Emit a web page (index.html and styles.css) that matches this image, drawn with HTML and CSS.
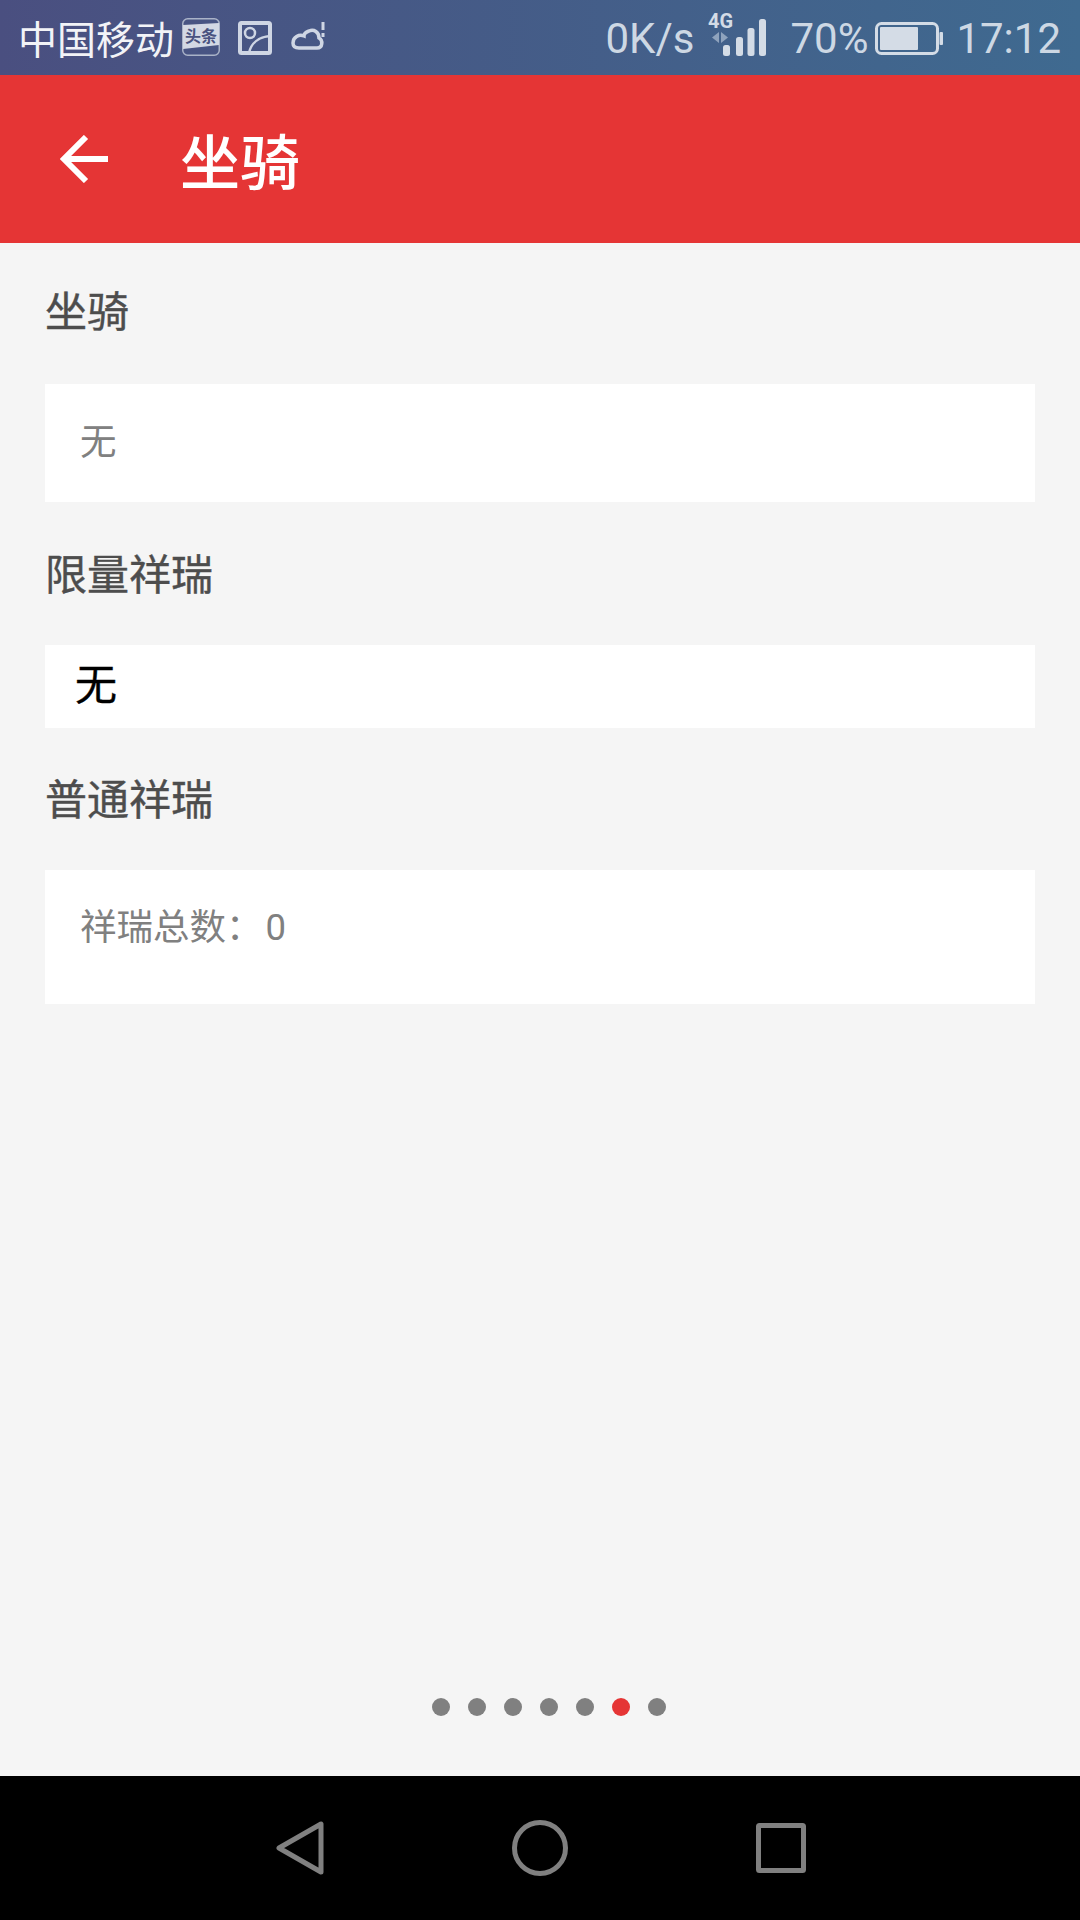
FILE: index.html
```html
<!DOCTYPE html>
<html lang="en">
<head>
    <meta charset="UTF-8">
    <meta name="viewport" content="width=device-width, initial-scale=1.0">
    <title>坐骑</title>
    <link rel="stylesheet" href="styles.css">
</head>
<body>
    <div class="status-bar">
        <div class="status-left">
            <span class="carrier">中国移动</span>
            <svg class="news-icon" width="38" height="38" viewBox="0 0 38 38">
                <rect x="0.75" y="0.75" width="36.5" height="36.5" rx="5" fill="none" stroke="#aab3c8" stroke-width="1.5"/>
                <path d="M1 7 L37 5 V27 L1 31 Z" fill="#d3d8e4"/>
                <text x="3" y="24" class="news-text">头条</text>
            </svg>
            <svg class="photo-icon" width="34" height="34" viewBox="0 0 34 34" fill="none" stroke="#cfd6e4">
                <rect x="2" y="2" width="30" height="30" rx="1.5" stroke-width="4"/>
                <circle cx="12" cy="12" r="5" stroke-width="2.5"/>
                <path d="M11 32 C13 22 21 16 32 15" stroke-width="2.5"/>
            </svg>
            <svg class="cloud-icon" width="36" height="32" viewBox="0 0 36 32" fill="none" stroke="#cfd6e4">
                <path d="M9 28 H27 C33 28 33 20 29 18 C29 12 24 9 19 11 C16 12 14 14 14 16 C9 14 3 17 3 23 C3 26 5 28 9 28 Z" stroke-width="3.5"/>
                <path d="M33 2 V10 M33 13 V17" stroke-width="3"/>
            </svg>
        </div>
        <div class="status-right">
            <span class="speed">0K/s</span>
            <svg class="signal-icon" width="58" height="48" viewBox="0 0 58 48">
                <text x="0" y="20" class="net-text">4G</text>
                <path d="M11 24 L4 29.5 L11 35 Z M13 24 L20 29.5 L13 35 Z" fill="#8fa3bd"/>
                <rect x="15" y="37" width="7" height="11" rx="2.5" fill="#d4dce6"/>
                <rect x="28" y="29" width="7" height="19" rx="2.5" fill="#d4dce6"/>
                <rect x="39.5" y="20" width="7" height="28" rx="2.5" fill="#d4dce6"/>
                <rect x="51" y="11" width="7" height="37" rx="2.5" fill="#d4dce6"/>
            </svg>
            <span class="percent">70%</span>
            <svg class="battery-icon" width="68" height="33" viewBox="0 0 68 33">
                <rect x="1.5" y="1.5" width="61" height="30" rx="5" fill="none" stroke="#d4dce6" stroke-width="3"/>
                <rect x="5" y="5" width="38" height="23" rx="1" fill="#d4dce6"/>
                <rect x="64.5" y="10" width="3.5" height="13" rx="1" fill="#d4dce6"/>
            </svg>
            <span class="clock">17:12</span>
        </div>
    </div>

    <div class="app-bar">
        <svg class="back-icon" width="48" height="48" viewBox="0 0 48 48" fill="none" stroke="#fff" stroke-width="6">
            <path d="M3 24 H48"/>
            <path d="M26 2 L4 24 L26 46"/>
        </svg>
        <h1>坐骑</h1>
    </div>

    <div class="content">
        <div class="section-label section-first">坐骑</div>
        <div class="card card-mount">
            <span class="muted-text">无</span>
        </div>

        <div class="section-label">限量祥瑞</div>
        <div class="card card-limited">
            <span class="black-text">无</span>
        </div>

        <div class="section-label">普通祥瑞</div>
        <div class="card card-normal">
            <span class="muted-text">祥瑞总数：<span class="count">0</span></span>
        </div>
    </div>

    <div class="pager">
        <span class="dot"></span>
        <span class="dot"></span>
        <span class="dot"></span>
        <span class="dot"></span>
        <span class="dot"></span>
        <span class="dot active"></span>
        <span class="dot"></span>
    </div>

    <div class="nav-bar">
        <svg width="48" height="54" viewBox="0 0 48 54" fill="none" stroke="#808080" stroke-width="5" stroke-linejoin="round">
            <path d="M45 3 V51 L3 27 Z"/>
        </svg>
        <svg width="56" height="56" viewBox="0 0 56 56" fill="none" stroke="#808080" stroke-width="5">
            <circle cx="28" cy="28" r="25.5"/>
        </svg>
        <svg width="50" height="50" viewBox="0 0 50 50" fill="none" stroke="#808080" stroke-width="5" stroke-linejoin="round">
            <rect x="2.5" y="2.5" width="45" height="45" rx="1"/>
        </svg>
    </div>
</body>
</html>
```

FILE: styles.css
```css
* {
    box-sizing: border-box;
}

body {
    font-family: "Noto Sans CJK SC", "Noto Sans", sans-serif;
    background: #f5f5f5;
    margin: 0;
    padding: 0;
    width: 1080px;
    height: 1920px;
    display: flex;
    flex-direction: column;
    overflow: hidden;
}

.status-bar {
    height: 75px;
    background: linear-gradient(to right, #4a4f80, #3f6a90);
    display: flex;
    justify-content: space-between;
    align-items: center;
    padding: 0 19px 0 18px;
    flex-shrink: 0;
}

.status-left,
.status-right {
    display: flex;
    align-items: center;
}

.carrier {
    font-size: 39px;
    color: #f2f3f7;
    line-height: 1;
    margin-top: -1px;
}

.news-icon {
    margin-left: 8px;
    margin-top: -2px;
}

.news-text {
    font-family: "Noto Sans CJK SC", sans-serif;
    font-size: 16px;
    font-weight: 700;
    fill: #4a5380;
}

.photo-icon {
    margin-left: 18px;
}

.cloud-icon {
    margin-left: 18px;
    margin-top: -3px;
}

.status-right {
    font-family: Roboto, sans-serif;
    font-size: 42px;
    color: #cdd8e4;
    line-height: 1;
}

.speed,
.percent,
.clock {
    padding-top: 3px;
}

.signal-icon {
    margin-left: 14px;
    margin-top: -11px;
}

.net-text {
    font-family: Roboto, sans-serif;
    font-size: 20px;
    font-weight: 700;
    fill: #d4dce6;
}

.percent {
    margin-left: 24px;
}

.battery-icon {
    margin-left: 7px;
    margin-top: 2px;
}

.clock {
    margin-left: 13px;
}

.app-bar {
    height: 168px;
    background: #e53535;
    display: flex;
    align-items: center;
    padding-left: 60px;
    flex-shrink: 0;
}

.app-bar h1 {
    margin: 0 0 0 72px;
    font-size: 60px;
    font-weight: 500;
    color: #fff;
    line-height: 1;
}

.content {
    flex: 1;
    padding: 0 45px;
}

.section-label {
    height: 142px;
    padding-bottom: 5px;
    display: flex;
    align-items: center;
    font-size: 42px;
    color: #4d4d4d;
    -webkit-text-stroke: 0.4px #4d4d4d;
}

.section-first {
    height: 141px;
    padding-bottom: 11px;
}

.card {
    background: #fff;
}

.card-mount {
    height: 118px;
    margin-bottom: 1px;
    padding: 38px 35px 0;
}

.card-limited {
    height: 83px;
    padding: 0 30px 10px;
    display: flex;
    align-items: center;
}

.card-normal {
    height: 134px;
    padding: 37px 35px 0;
}

.muted-text {
    font-size: 36.5px;
    color: #808080;
    line-height: 1;
    display: block;
}

.black-text {
    font-size: 42px;
    color: #000;
    line-height: 1;
    -webkit-text-stroke: 0.4px #000;
}

.count {
    font-family: Roboto, sans-serif;
    margin-left: 3px;
}

.pager {
    height: 78px;
    display: flex;
    gap: 18px;
    justify-content: center;
    padding-left: 18px;
    flex-shrink: 0;
}

.dot {
    width: 18px;
    height: 18px;
    border-radius: 50%;
    background: #808080;
}

.dot.active {
    background: #e53535;
}

.nav-bar {
    height: 144px;
    background: #000;
    display: flex;
    align-items: center;
    padding: 0 0 0 276px;
    gap: 188px;
    flex-shrink: 0;
}
```
